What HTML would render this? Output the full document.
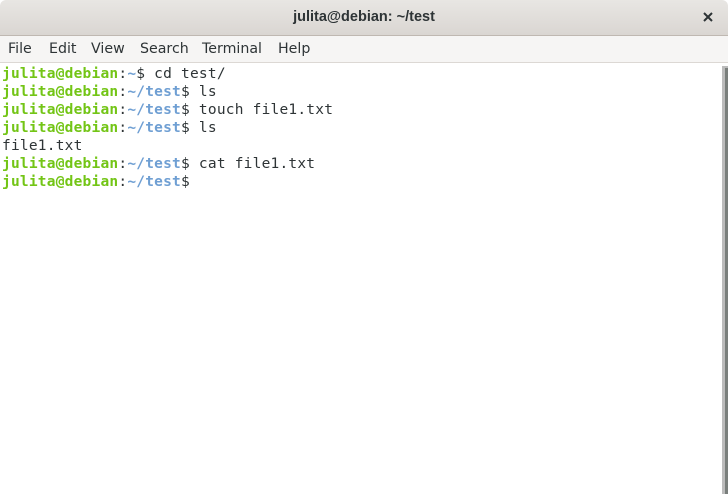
<!DOCTYPE html>
<html><head><style>
html,body{margin:0;padding:0;width:728px;height:494px;overflow:hidden;background:#fff}
.title{position:absolute;left:0;top:0;width:728px;height:35px;background:linear-gradient(#e8e6e3,#dad6d2);border-bottom:1px solid #bfb8b1;border-radius:6px 6px 0 0;font:bold 14.5px "Liberation Sans","DejaVu Sans",sans-serif;color:#2e3436;text-align:center;line-height:34px}
.close{position:absolute;right:14px;top:11px;width:12px;height:12px}
.menu{position:absolute;left:0;top:36px;width:728px;height:26px;background:#f6f5f4;border-bottom:1px solid #dcd8d4;font:14.2px "DejaVu Sans","Liberation Sans",sans-serif;color:#2e3436;line-height:27px}
.menu span{position:absolute;top:0}
.term{position:absolute;left:2px;top:65px;font:14.5px "DejaVu Sans Mono","Liberation Mono",monospace;letter-spacing:0.22px;line-height:18px;color:#2e3436;white-space:pre}
.g{color:#73c516;font-weight:bold}
.b{color:#6f9fd3;font-weight:bold}
.sb{position:absolute;left:722px;top:66px;width:6px;height:428px;background:#bcbcbc}
.sb2{position:absolute;left:725px;top:68px;width:3px;height:426px;background:#7a7f7c}
</style></head><body>
<div class="title">julita@debian: ~/test
<svg class="close" viewBox="0 0 12 12"><path d="M2 2L10 10M10 2L2 10" stroke="#2e3436" stroke-width="2"/></svg></div>
<div class="menu">
<span style="left:8px">File</span><span style="left:49px">Edit</span><span style="left:91px">View</span><span style="left:140px">Search</span><span style="left:202px">Terminal</span><span style="left:278px">Help</span>
</div>
<div class="term"><span class="g">julita@debian</span>:<span class="b">~</span>$ cd test/
<span class="g">julita@debian</span>:<span class="b">~/test</span>$ ls
<span class="g">julita@debian</span>:<span class="b">~/test</span>$ touch file1.txt
<span class="g">julita@debian</span>:<span class="b">~/test</span>$ ls
file1.txt
<span class="g">julita@debian</span>:<span class="b">~/test</span>$ cat file1.txt
<span class="g">julita@debian</span>:<span class="b">~/test</span>$ </div>
<div class="sb"></div><div class="sb2"></div>
</body></html>
